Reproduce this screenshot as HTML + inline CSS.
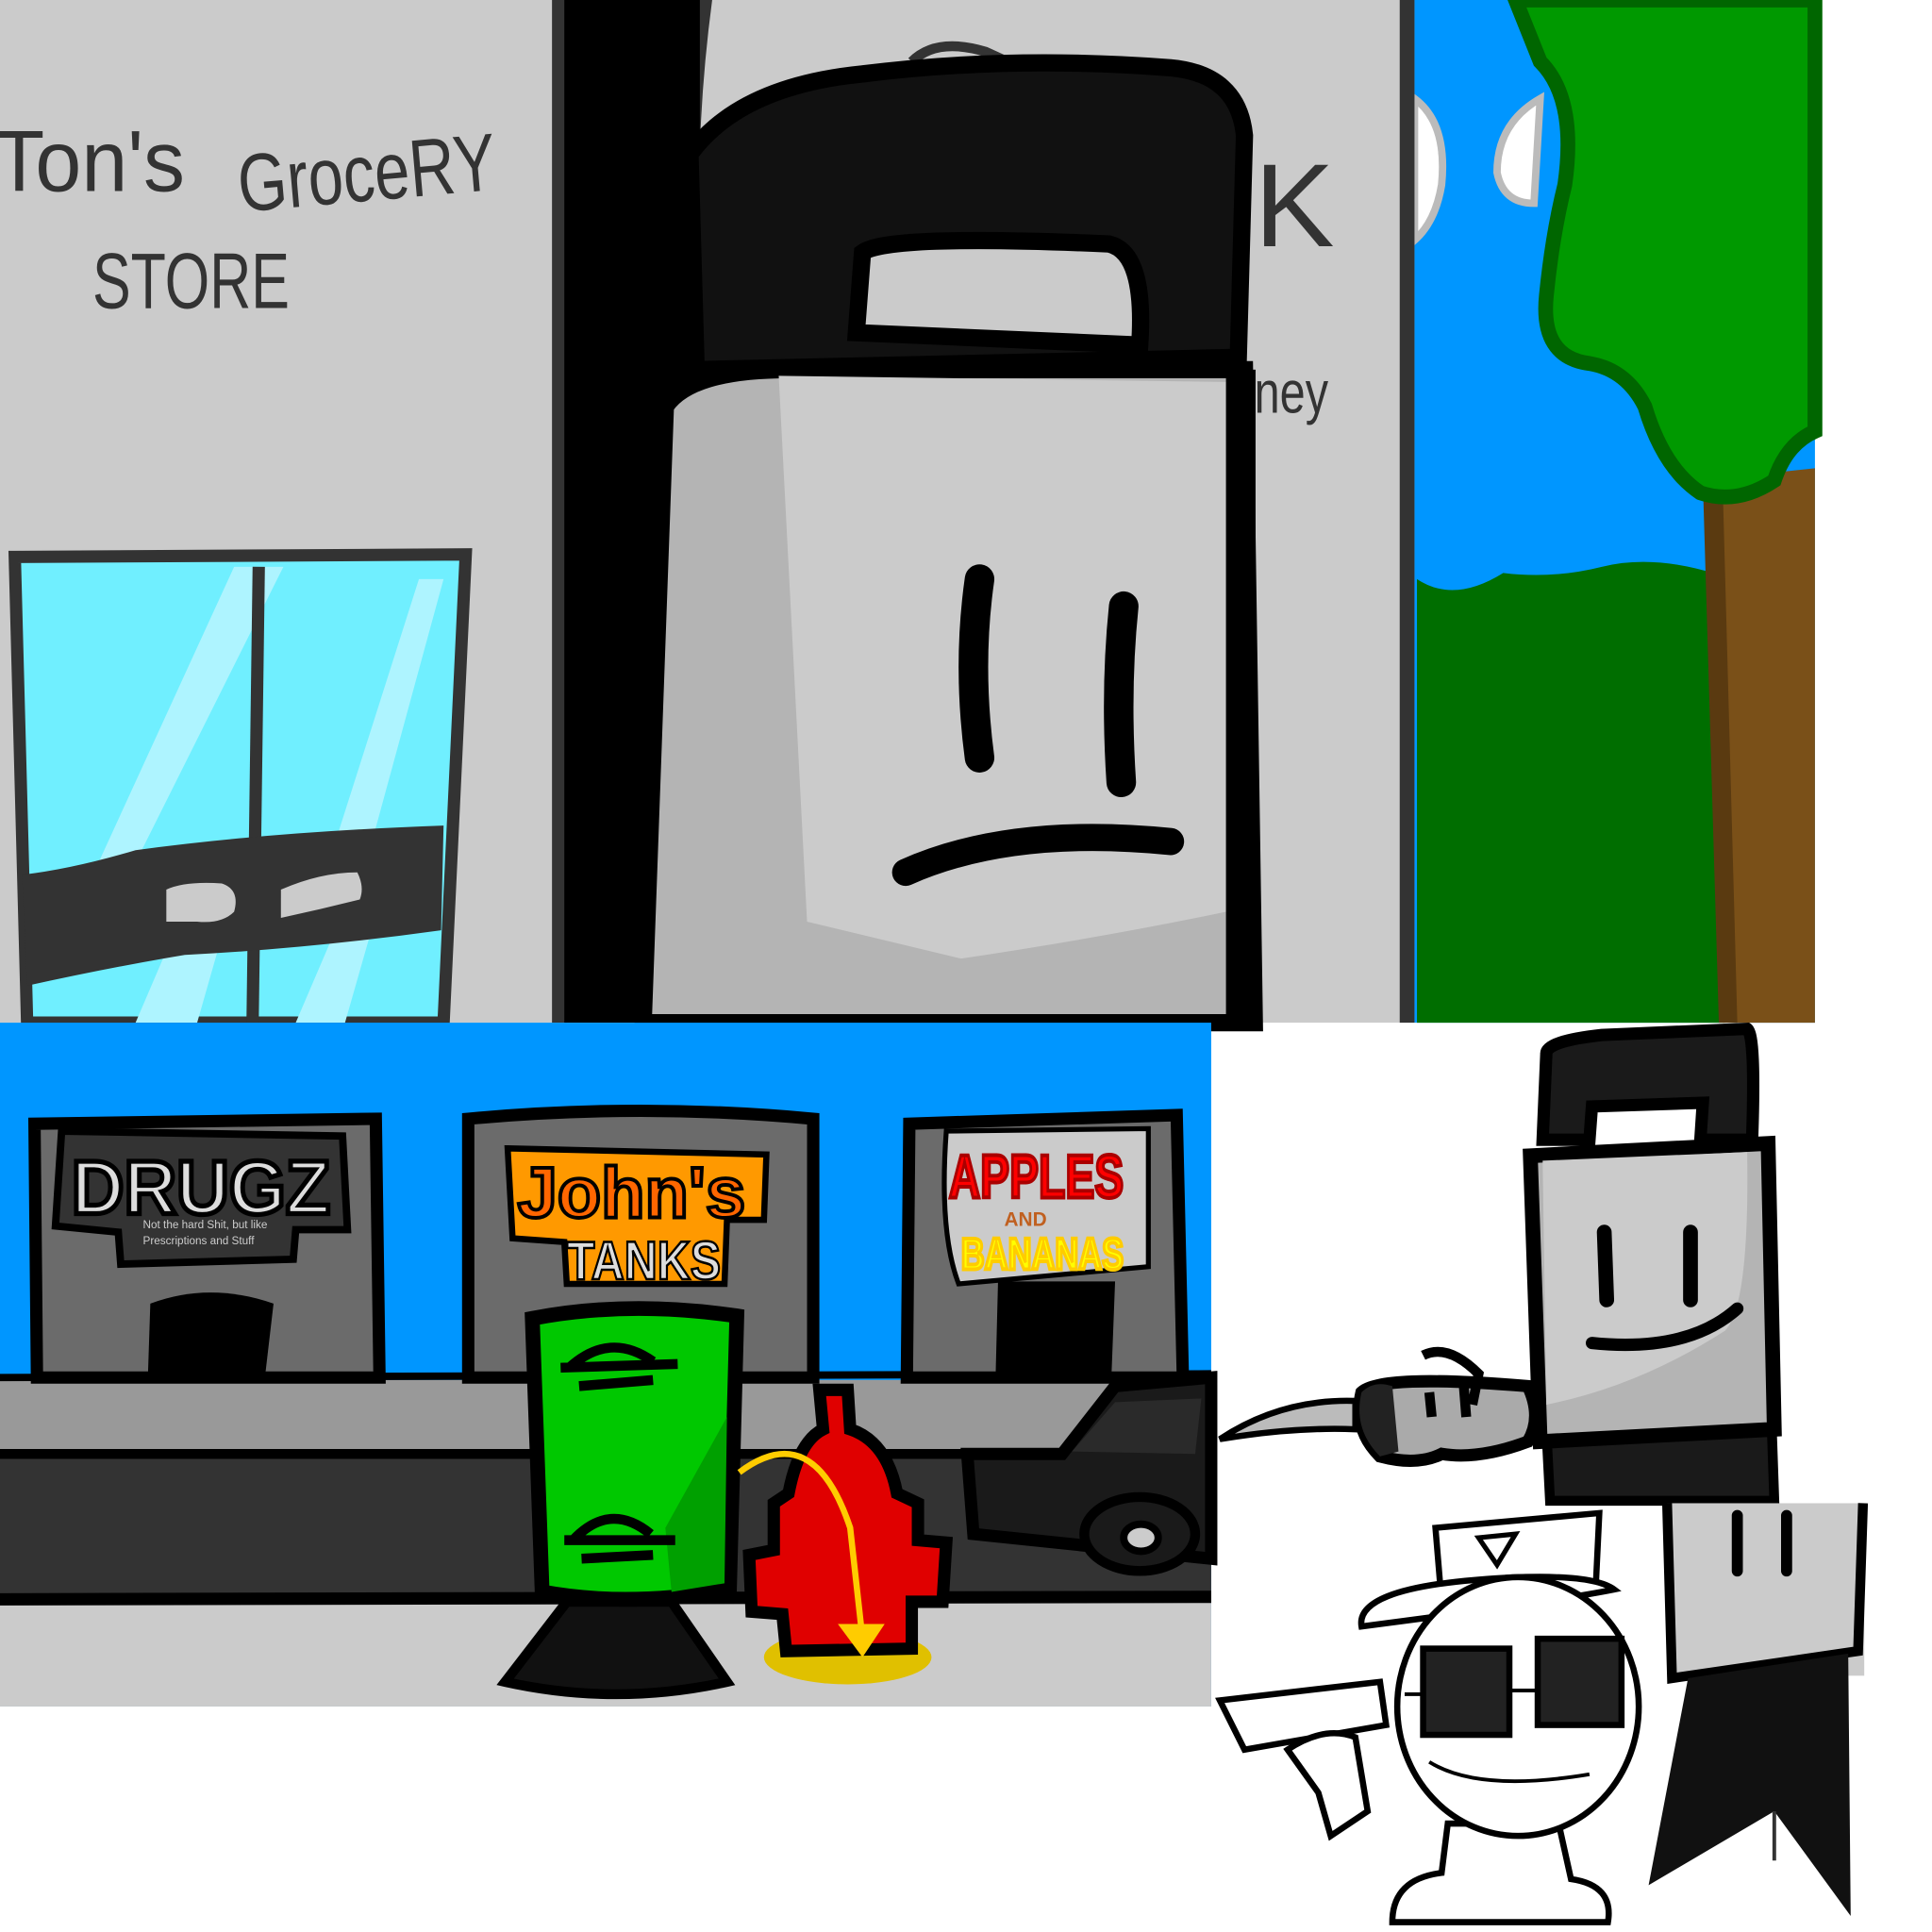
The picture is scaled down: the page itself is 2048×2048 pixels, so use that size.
<!DOCTYPE html>
<html><head><meta charset="utf-8"><style>html,body{margin:0;padding:0;background:#fff}svg{display:block}</style></head>
<body>
<svg width="2048" height="2048" viewBox="0 0 1568 1568" xmlns="http://www.w3.org/2000/svg">
<rect width="1568" height="1568" fill="#fff"/>
<!-- TOP PANEL -->
<rect x="0" y="0" width="1148" height="830" fill="#cbcbcb"/>
<rect x="1148" y="0" width="325" height="830" fill="#0096ff"/>
<path d="M1150 470 Q1180 490 1220 465 Q1260 470 1300 460 Q1340 450 1390 465 L1400 830 L1150 830Z" fill="#006e00"/>
<path d="M1148 80 Q1175 100 1170 150 Q1165 180 1148 195Z" fill="#fff" stroke="#bbb" stroke-width="6"/>
<path d="M1250 80 Q1215 100 1215 140 Q1220 165 1245 165Z" fill="#fff" stroke="#bbb" stroke-width="6"/>
<path d="M1382 390 L1473 380 L1473 830 L1398 830 Q1395 600 1382 390Z" fill="#7a5018"/>
<path d="M1382 390 L1395 830 L1410 830 L1398 390Z" fill="#5a3a10"/>
<path d="M1230 0 L1473 0 L1473 350 Q1450 360 1440 390 Q1410 410 1380 400 Q1350 380 1335 330 Q1320 300 1290 295 Q1250 290 1255 240 Q1260 190 1270 150 Q1280 80 1250 50Z" fill="#009900" stroke="#006600" stroke-width="12"/>
<rect x="1136" y="0" width="12" height="830" fill="#333"/>
<!-- sign text -->
<g fill="#333" font-family="Liberation Sans, sans-serif">
<text x="-5" y="155" font-size="70" textLength="155" lengthAdjust="spacingAndGlyphs">Ton's</text>
<text x="195" y="172" font-size="66" textLength="210" lengthAdjust="spacingAndGlyphs" transform="rotate(-5 195 172)">GroceRY</text>
<text x="75" y="250" font-size="64" textLength="160" lengthAdjust="spacingAndGlyphs">STORE</text>
<text x="1018" y="200" font-size="96" textLength="65" lengthAdjust="spacingAndGlyphs">K</text>
<text x="1018" y="335" font-size="48" textLength="60" lengthAdjust="spacingAndGlyphs">ney</text>
</g>
<!-- window -->
<path d="M12 452 L378 450 L360 830 L22 830Z" fill="#70efff" stroke="#333" stroke-width="10"/>
<path d="M80 700 L190 460 L230 460 L110 700Z M270 690 L340 470 L360 470 L300 690Z M110 830 L140 760 L180 760 L160 830Z M240 830 L270 760 L300 760 L280 830Z" fill="#aef4ff"/>
<path d="M210 460 L205 830" stroke="#333" stroke-width="10"/>
<path d="M18 710 Q60 705 110 690 Q220 675 360 670 L358 755 Q250 770 150 775 Q90 785 22 800Z" fill="#333"/>
<path d="M135 722 Q150 715 180 717 Q195 722 190 740 Q180 750 160 748 L135 748Z" fill="#cbcbcb"/>
<path d="M228 722 Q260 708 290 708 Q296 720 292 730 Q260 738 228 745Z" fill="#cbcbcb"/>
<!-- pole -->
<path d="M448 0 L578 0 Q570 60 568 120 L460 830 L448 830Z" fill="#333"/>
<rect x="458" y="0" width="110" height="830" fill="#000"/>
<!-- character hat -->
<path d="M740 50 Q760 30 800 42 L835 58" fill="none" stroke="#333" stroke-width="8"/>
<path d="M560 125 Q600 70 700 60 Q820 45 950 55 Q1005 60 1010 110 L1005 290 L565 300 Z" fill="#111" stroke="#000" stroke-width="14"/>
<path d="M695 270 L700 205 Q720 190 900 198 Q930 205 925 280Z" fill="#cbcbcb" stroke="#000" stroke-width="14"/>
<!-- body -->
<path d="M540 330 Q560 300 640 300 L1010 300 L1018 830 L522 830Z" fill="#b4b4b4" stroke="#000" stroke-width="14"/>
<path d="M632 305 L995 310 L995 740 Q900 760 780 778 L655 748Z" fill="#cbcbcb"/>
<rect x="995" y="300" width="24" height="530" fill="#000"/>
<path d="M795 470 Q785 540 795 615" stroke="#000" stroke-width="24" stroke-linecap="round" fill="none"/>
<path d="M912 492 Q905 560 910 635" stroke="#000" stroke-width="24" stroke-linecap="round" fill="none"/>
<path d="M735 708 Q820 670 950 683" stroke="#000" stroke-width="22" stroke-linecap="round" fill="none"/>

<!-- BOTTOM-LEFT PANEL -->
<rect x="0" y="830" width="983" height="555" fill="#0096ff"/>
<rect x="0" y="1120" width="983" height="60" fill="#999"/>
<rect x="0" y="1180" width="983" height="120" fill="#333"/>
<rect x="0" y="1300" width="983" height="85" fill="#cbcbcb"/>
<path d="M0 1118 L983 1115" stroke="#000" stroke-width="6"/>
<path d="M0 1180 L983 1180" stroke="#000" stroke-width="8"/>
<path d="M0 1298 L983 1296" stroke="#000" stroke-width="10"/>
<g stroke="#000" stroke-width="10">
<path d="M30 1118 L28 912 L305 908 L308 1118Z" fill="#6b6b6b"/>
<path d="M380 1118 L380 908 Q520 895 660 908 L660 1118Z" fill="#6b6b6b"/>
<path d="M736 1118 L738 912 L955 905 L960 1118Z" fill="#6b6b6b"/>
</g>
<path d="M120 1118 L122 1058 Q170 1040 222 1058 L215 1118Z" fill="#000"/>
<path d="M808 1118 L810 1040 L905 1040 L902 1118Z" fill="#000"/>
<path d="M50 918 L278 922 L282 998 L240 998 L238 1022 L98 1026 L96 1000 L45 995Z" fill="#333" stroke="#000" stroke-width="6"/>
<text x="58" y="985" font-family="Liberation Sans, sans-serif" font-weight="bold" font-size="62" fill="#ddd" stroke="#000" stroke-width="4" textLength="210" lengthAdjust="spacingAndGlyphs">DRUGZ</text>
<text x="116" y="997" font-family="Liberation Sans, sans-serif" font-size="9" fill="#ccc">Not the hard Shit, but like</text>
<text x="116" y="1010" font-family="Liberation Sans, sans-serif" font-size="9" fill="#ccc">Prescriptions and Stuff</text>
<path d="M412 932 L622 937 L620 990 L590 990 L588 1042 L460 1042 L458 1008 L416 1005Z" fill="#ff9900" stroke="#000" stroke-width="5"/>
<text x="420" y="988" font-family="Liberation Sans, sans-serif" font-weight="bold" font-size="58" fill="#ff6600" stroke="#000" stroke-width="3" textLength="185" lengthAdjust="spacingAndGlyphs">John's</text>
<text x="460" y="1038" font-family="Liberation Sans, sans-serif" font-weight="bold" font-size="44" fill="#ddd" stroke="#000" stroke-width="2" textLength="125" lengthAdjust="spacingAndGlyphs">TANKS</text>
<path d="M768 918 L932 916 L932 1028 L778 1042 Q762 1000 768 918Z" fill="#cbcbcb" stroke="#000" stroke-width="4"/>
<text x="770" y="972" font-family="Liberation Sans, sans-serif" font-weight="bold" font-size="50" fill="#f00" stroke="#a00" stroke-width="3" textLength="142" lengthAdjust="spacingAndGlyphs">APPLES</text>
<text x="815" y="995" font-family="Liberation Sans, sans-serif" font-weight="bold" font-size="16" fill="#c06020">AND</text>
<text x="780" y="1030" font-family="Liberation Sans, sans-serif" font-weight="bold" font-size="36" fill="#ff0" stroke="#fc0" stroke-width="3" textLength="132" lengthAdjust="spacingAndGlyphs">BANANAS</text>
<!-- car -->
<path d="M785 1180 L862 1180 L905 1125 L983 1118 L983 1265 L790 1245 Z" fill="#1a1a1a" stroke="#000" stroke-width="10"/>
<path d="M870 1178 L905 1138 L975 1135 L970 1180Z" fill="#2a2a2a"/>
<ellipse cx="925" cy="1245" rx="45" ry="30" fill="#1a1a1a" stroke="#000" stroke-width="8"/>
<ellipse cx="926" cy="1248" rx="14" ry="11" fill="#ccc" stroke="#000" stroke-width="6"/>
<!-- trash can -->
<path d="M410 1365 L460 1300 L545 1300 L590 1365 Q500 1385 410 1365Z" fill="#111" stroke="#000" stroke-width="8"/>
<path d="M432 1070 Q510 1055 598 1068 L592 1290 Q510 1305 440 1292Z" fill="#00c800" stroke="#000" stroke-width="12"/>
<path d="M540 1240 L590 1150 L588 1285 L545 1292Z" fill="#00a000"/>
<path d="M462 1110 Q495 1080 530 1105 M455 1110 L550 1107 M470 1125 L530 1120" stroke="#000" stroke-width="8" fill="none"/>
<path d="M465 1250 Q495 1218 528 1245 M458 1250 L548 1250 M472 1265 L530 1262" stroke="#000" stroke-width="8" fill="none"/>
<!-- hydrant -->
<ellipse cx="688" cy="1345" rx="68" ry="22" fill="#e0c000"/>
<path d="M665 1128 L688 1128 L690 1160 Q720 1170 728 1212 L745 1220 L745 1250 L768 1252 L765 1300 L740 1300 L740 1338 L638 1340 L635 1310 L610 1308 L608 1262 L628 1258 L628 1220 L640 1212 Q648 1170 668 1160Z" fill="#e00000" stroke="#000" stroke-width="10"/>
<path d="M600 1195 Q660 1150 690 1240 L700 1330" stroke="#ffcc00" stroke-width="5" fill="none"/>
<path d="M680 1318 L718 1318 L700 1345Z" fill="#ffcc00"/>

<!-- knife guy -->
<path d="M1255 855 Q1255 845 1300 840 L1418 835 Q1425 840 1422 925 L1380 925 L1382 895 L1292 898 L1290 925 L1252 925Z" fill="#1a1a1a" stroke="#000" stroke-width="10"/>
<path d="M1255 1160 L1258 1218 L1440 1218 L1438 1160Z" fill="#1a1a1a" stroke="#000" stroke-width="8"/>
<path d="M1242 938 L1435 928 L1440 1160 L1250 1170Z" fill="#b4b4b4" stroke="#000" stroke-width="12"/>
<path d="M1252 942 L1418 935 Q1420 1060 1400 1080 Q1330 1125 1255 1140Z" fill="#cbcbcb"/>
<path d="M1302 1000 L1304 1055 M1372 1000 L1372 1055" stroke="#000" stroke-width="12" stroke-linecap="round"/>
<path d="M1292 1090 Q1370 1098 1410 1062" stroke="#000" stroke-width="10" stroke-linecap="round" fill="none"/>
<path d="M990 1168 Q1040 1135 1100 1137 L1100 1160 Q1050 1158 990 1168Z" fill="#bbb" stroke="#000" stroke-width="5"/>
<path d="M1105 1130 Q1120 1115 1240 1125 Q1252 1150 1240 1170 Q1200 1185 1170 1180 Q1150 1190 1120 1182 Q1098 1160 1105 1130Z" fill="#aaa" stroke="#000" stroke-width="10"/>
<path d="M1105 1130 Q1115 1120 1130 1125 L1135 1178 L1120 1182 Q1098 1160 1105 1130Z" fill="#222"/>
<path d="M1155 1100 Q1175 1090 1200 1115 L1195 1140 M1160 1130 L1162 1150 M1188 1125 L1190 1150" stroke="#000" stroke-width="8" fill="none"/>
<!-- sketchy panel -->
<rect x="1353" y="1220" width="160" height="140" fill="#cbcbcb"/>
<path d="M1353 1220 L1357 1362 L1508 1340 L1512 1220" fill="none" stroke="#000" stroke-width="8"/>
<path d="M1410 1230 L1410 1275 M1450 1230 L1450 1275" stroke="#000" stroke-width="9" stroke-linecap="round"/>
<path d="M1370 1362 L1500 1342 L1502 1555 L1440 1470 L1338 1530Z" fill="#111"/>
<path d="M1440 1470 L1440 1510" stroke="#333" stroke-width="3"/>
<!-- cop -->
<g fill="#fff" stroke="#000" stroke-width="5">
<path d="M1130 1560 Q1130 1525 1170 1520 L1175 1480 L1265 1480 L1275 1525 Q1310 1530 1305 1560Z"/>
<path d="M1165 1240 L1298 1228 L1295 1290 L1170 1300Z"/>
<path d="M1105 1320 Q1100 1290 1200 1282 Q1290 1275 1310 1290 Q1260 1300 1105 1320Z"/>
<ellipse cx="1232" cy="1385" rx="98" ry="105"/>
<path d="M990 1380 L1120 1365 L1125 1400 L1010 1420Z"/>
<path d="M1045 1420 Q1075 1400 1100 1410 L1110 1470 L1080 1490 L1070 1455Z"/>
</g>
<path d="M1200 1248 L1230 1245 L1215 1270Z" fill="#fff" stroke="#000" stroke-width="4"/>
<rect x="1155" y="1338" width="70" height="70" fill="#222" stroke="#000" stroke-width="5"/>
<rect x="1248" y="1330" width="68" height="70" fill="#222" stroke="#000" stroke-width="5"/>
<path d="M1140 1375 L1155 1375 M1225 1372 L1248 1372" stroke="#000" stroke-width="3"/>
<path d="M1160 1430 Q1200 1455 1290 1440" stroke="#000" stroke-width="3" fill="none"/>
</svg>
</body></html>
